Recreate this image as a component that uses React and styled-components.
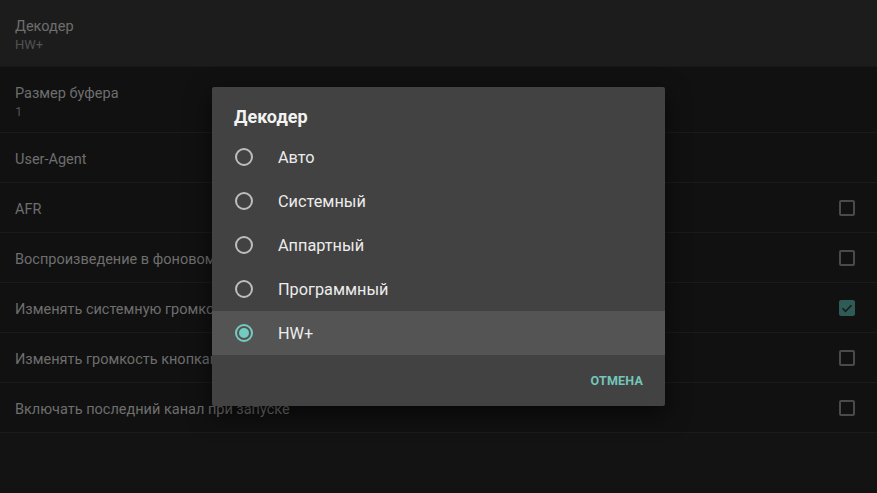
import React from "react";
import styled, { createGlobalStyle } from "styled-components";

const Global = createGlobalStyle`
  html, body { margin: 0; padding: 0; background: #131313; }
  body { font-family: Roboto, "Noto Sans", "Liberation Sans", sans-serif; }
  * { box-sizing: border-box; }
`;

const Page = styled.div`
  position: relative;
  width: 877px;
  height: 493px;
  overflow: hidden;
  background: #131313;
`;

const List = styled.div`
  display: flex;
  flex-direction: column;
`;

const Row = styled.div`
  display: flex;
  align-items: center;
  justify-content: space-between;
  padding: ${(p) => (p.$sub ? "17px 22px 12px 15px" : "4px 22px 0 15px")};
  height: ${(p) => (p.$sub ? "auto" : "50px")};
  background: ${(p) => (p.$focused ? "#1c1c1c" : "#111111")};
  border-bottom: 1px solid #1b1b1b;
  ${(p) => (p.$first ? "padding-bottom: 13px; border-bottom: 1px solid #181818;" : "")}
`;

const Texts = styled.div`
  display: flex;
  flex-direction: column;
`;

const Title = styled.div`
  font-size: 14.5px;
  line-height: 20px;
  color: #6e6e6e;
  white-space: nowrap;
`;

const Sub = styled.div`
  font-size: 13px;
  line-height: 16px;
  color: #525252;
`;

const Check = styled.div`
  width: 16px;
  height: 16px;
  margin-top: -4px;
  border-radius: 2px;
  border: 2px solid ${(p) => (p.$on ? "#2f5b56" : "#4a4a4a")};
  background: ${(p) => (p.$on ? "#2f5b56" : "transparent")};
  display: flex;
  align-items: center;
  justify-content: center;
`;

const Dialog = styled.div`
  position: absolute;
  left: 212px;
  top: 87px;
  width: 453px;
  background: #424242;
  border-radius: 2px;
  box-shadow: 0 8px 24px rgba(0, 0, 0, 0.6);
  display: flex;
  flex-direction: column;
`;

const DialogTitle = styled.div`
  padding: 20px 22px 8px;
  font-size: 18px;
  line-height: 20px;
  font-weight: 700;
  color: #f2f2f2;
`;

const Options = styled.div`
  display: flex;
  flex-direction: column;
`;

const Option = styled.div`
  display: flex;
  align-items: center;
  height: 44px;
  padding-left: 23px;
  background: ${(p) => (p.$active ? "#545454" : "transparent")};
`;

const Radio = styled.div`
  width: 18px;
  height: 18px;
  border-radius: 50%;
  border: 2px solid ${(p) => (p.$on ? "#74cbc0" : "#bdbdbd")};
  display: flex;
  align-items: center;
  justify-content: center;
  margin-right: 25px;
`;

const Dot = styled.div`
  width: 10px;
  height: 10px;
  border-radius: 50%;
  background: #74cbc0;
`;

const Label = styled.div`
  font-size: 16.3px;
  color: #ececec;
  padding-top: 1px;
`;

const Actions = styled.div`
  display: flex;
  justify-content: flex-end;
  align-items: center;
  height: 51px;
  padding-right: 22px;
`;

const Button = styled.div`
  font-size: 12.5px;
  font-weight: 700;
  color: #74c6bb;
  letter-spacing: 0.2px;
`;

const rows = [
  { title: "Декодер", sub: "HW+", focused: true, first: true },
  { title: "Размер буфера", sub: "1" },
  { title: "User-Agent" },
  { title: "AFR", check: false },
  { title: "Воспроизведение в фоновом режиме", check: false },
  { title: "Изменять системную громкость", check: true },
  { title: "Изменять громкость кнопками", check: false },
  { title: "Включать последний канал при запуске", check: false },
];

const options = ["Авто", "Системный", "Аппартный", "Программный", "HW+"];

export default function App() {
  return (
    <Page>
      <Global />
      <List>
        {rows.map((r) => (
          <Row key={r.title} $sub={!!r.sub} $focused={r.focused} $first={r.first}>
            <Texts>
              <Title>{r.title}</Title>
              {r.sub && <Sub>{r.sub}</Sub>}
            </Texts>
            {r.check !== undefined && (
              <Check $on={r.check}>
                {r.check && (
                  <svg width="12" height="12" viewBox="0 0 24 24">
                    <path d="M3 12.5l6 6L21 6.5" fill="none" stroke="#1a1a1a" strokeWidth="3.2" />
                  </svg>
                )}
              </Check>
            )}
          </Row>
        ))}
      </List>
      <Dialog>
        <DialogTitle>Декодер</DialogTitle>
        <Options>
          {options.map((o, i) => {
            const on = i === options.length - 1;
            return (
              <Option key={o} $active={on}>
                <Radio $on={on}>{on && <Dot />}</Radio>
                <Label>{o}</Label>
              </Option>
            );
          })}
        </Options>
        <Actions>
          <Button>ОТМЕНА</Button>
        </Actions>
      </Dialog>
    </Page>
  );
}
